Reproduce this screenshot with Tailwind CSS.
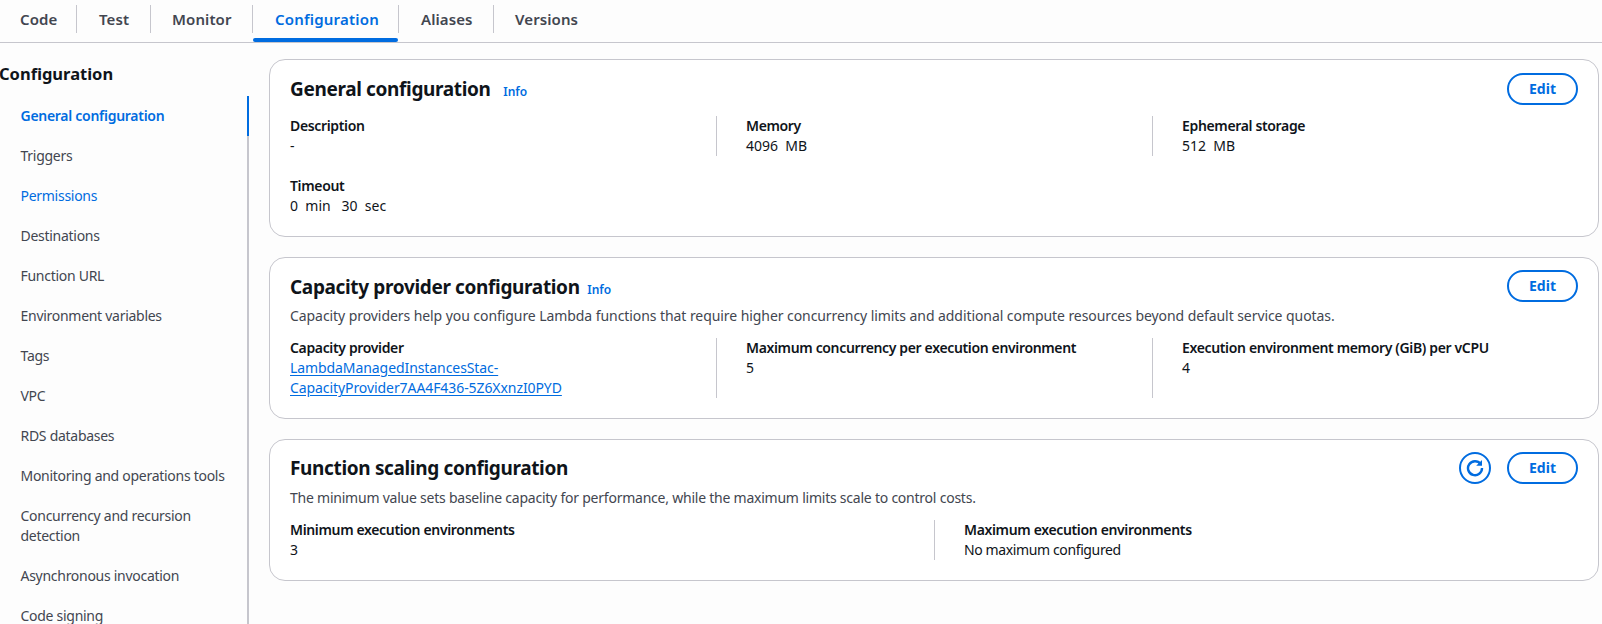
<!DOCTYPE html>
<html lang="en">
<head>
    <meta charset="UTF-8">
    <title>Lambda function configuration</title>
    <script src="https://cdn.jsdelivr.net/npm/@tailwindcss/browser@4"></script>
</head>
<body class="bg-[#fdfdfd] text-[#0f141a] font-['Noto_Sans',sans-serif] text-[14px] leading-[20px] h-[624px] overflow-hidden">
    <!-- tabs -->
    <nav class="flex h-[43px] border-b border-[#c6c6cd] font-semibold text-[#424650] text-[15px] tracking-[0.1px]">
        <div class="w-[77px] pl-[20px] h-[28px] mt-[5px] border-r border-[#c6c6cd] flex items-center">Code</div>
        <div class="w-[74px] pl-[22px] h-[28px] mt-[5px] border-r border-[#c6c6cd] flex items-center">Test</div>
        <div class="w-[102px] pl-[21px] h-[28px] mt-[5px] border-r border-[#c6c6cd] flex items-center">Monitor</div>
        <div class="relative w-[146px] pl-[22px] h-[28px] mt-[5px] border-r border-[#c6c6cd] flex items-center text-[#006ce0] tracking-[0.2px]">
            Configuration
            <span class="absolute left-0 right-0 top-[33px] h-[4px] bg-[#006ce0] rounded-[2px]"></span>
        </div>
        <div class="w-[95px] pl-[22px] h-[28px] mt-[5px] border-r border-[#c6c6cd] flex items-center">Aliases</div>
        <div class="pl-[21px] h-[28px] mt-[5px] flex items-center">Versions</div>
    </nav>

    <div class="flex">
        <!-- side nav -->
        <aside class="w-[269px] shrink-0">
            <h2 class="font-bold text-[16.5px] leading-[24px] -ml-[1px] mt-[19px] mb-[10px]">Configuration</h2>
            <ul class="w-[249px] text-[#424650] h-[528px] overflow-hidden tracking-[-0.28px]">
                <li class="pl-[20.5px] py-[10px] border-r-2 border-[#006ce0] font-semibold text-[#006ce0]">General configuration</li>
                <li class="pl-[20.5px] py-[10px] border-r-2 border-[#c6c6cd]">Triggers</li>
                <li class="pl-[20.5px] py-[10px] border-r-2 border-[#c6c6cd] text-[#006ce0]">Permissions</li>
                <li class="pl-[20.5px] py-[10px] border-r-2 border-[#c6c6cd]">Destinations</li>
                <li class="pl-[20.5px] py-[10px] border-r-2 border-[#c6c6cd]">Function URL</li>
                <li class="pl-[20.5px] py-[10px] border-r-2 border-[#c6c6cd]">Environment variables</li>
                <li class="pl-[20.5px] py-[10px] border-r-2 border-[#c6c6cd]">Tags</li>
                <li class="pl-[20.5px] py-[10px] border-r-2 border-[#c6c6cd]">VPC</li>
                <li class="pl-[20.5px] py-[10px] border-r-2 border-[#c6c6cd]">RDS databases</li>
                <li class="pl-[20.5px] py-[10px] border-r-2 border-[#c6c6cd]">Monitoring and operations tools</li>
                <li class="pl-[20.5px] py-[10px] pr-[20px] border-r-2 border-[#c6c6cd]">Concurrency and recursion detection</li>
                <li class="pl-[20.5px] py-[10px] border-r-2 border-[#c6c6cd]">Asynchronous invocation</li>
                <li class="pl-[20.5px] py-[10px] border-r-2 border-[#c6c6cd]">Code signing</li>
            </ul>
        </aside>

        <!-- cards -->
        <main class="w-[1330px] pt-[16px] flex flex-col gap-[20px]">
            <section class="bg-white border border-[#c6c6cd] rounded-[16px] px-[20px] pt-[13px] pb-[20px]">
                <div class="flex items-start justify-between h-[32px] -mb-[1px]">
                    <h3 class="mt-[1px] text-[19px] tracking-[-0.35px] font-bold leading-[30px]">General configuration <a class="ml-[8px] text-[12px] tracking-normal font-semibold text-[#006ce0]">Info</a></h3>
                    <button class="w-[71px] h-[32px] rounded-full border-2 border-[#006ce0] text-[#006ce0] font-bold">Edit</button>
                </div>
                <div class="grid grid-cols-[426px_436px_1fr] mt-[12px]">
                    <div>
                        <div class="font-semibold tracking-[-0.35px]">Description</div>
                        <div>-</div>
                    </div>
                    <div class="border-l border-[#c6c6cd] pl-[29px]">
                        <div class="font-semibold tracking-[-0.35px]">Memory</div>
                        <div class="whitespace-pre">4096  MB</div>
                    </div>
                    <div class="border-l border-[#c6c6cd] pl-[29px]">
                        <div class="font-semibold tracking-[-0.35px]">Ephemeral storage</div>
                        <div class="whitespace-pre">512  MB</div>
                    </div>
                    <div class="col-span-3 mt-[20px]">
                        <div class="font-semibold tracking-[-0.35px]">Timeout</div>
                        <div class="whitespace-pre">0  min   30  sec</div>
                    </div>
                </div>
            </section>

            <section class="bg-white border border-[#c6c6cd] rounded-[16px] px-[20px] pt-[12px] pb-[20px]">
                <div class="flex items-start justify-between h-[32px]">
                    <h3 class="mt-[2px] text-[19px] tracking-[-0.35px] font-bold leading-[30px]">Capacity provider configuration <a class="ml-[3px] text-[12px] tracking-normal font-semibold text-[#006ce0]">Info</a></h3>
                    <button class="w-[71px] h-[32px] rounded-full border-2 border-[#006ce0] text-[#006ce0] font-bold">Edit</button>
                </div>
                <p class="mt-[4px] text-[#424650] tracking-[-0.07px]">Capacity providers help you configure Lambda functions that require higher concurrency limits and additional compute resources beyond default service quotas.</p>
                <div class="grid grid-cols-[426px_436px_1fr] mt-[12px]">
                    <div>
                        <div class="font-semibold tracking-[-0.35px]">Capacity provider</div>
                        <a class="text-[#006ce0] underline underline-offset-2 tracking-[-0.08px]">LambdaManagedInstancesStac-<br>CapacityProvider7AA4F436-5Z6XxnzI0PYD</a>
                    </div>
                    <div class="border-l border-[#c6c6cd] pl-[29px]">
                        <div class="font-semibold tracking-[-0.35px]">Maximum concurrency per execution environment</div>
                        <div>5</div>
                    </div>
                    <div class="border-l border-[#c6c6cd] pl-[29px]">
                        <div class="font-semibold tracking-[-0.35px]">Execution environment memory (GiB) per vCPU</div>
                        <div>4</div>
                    </div>
                </div>
            </section>

            <section class="bg-white border border-[#c6c6cd] rounded-[16px] px-[20px] pt-[12px] pb-[20px]">
                <div class="flex items-center justify-between h-[32px]">
                    <h3 class="text-[19px] tracking-[-0.35px] font-bold leading-[30px]">Function scaling configuration</h3>
                    <div class="flex items-center gap-[16px]">
                        <button class="w-[32px] h-[32px] rounded-full border-2 border-[#006ce0] flex items-center justify-center">
                            <svg class="w-[18px] h-[18px]" viewBox="0 0 18 18" fill="none">
                                <path d="M14.6 5A7 7 0 1 0 16 9" stroke="#006ce0" stroke-width="2.4"/>
                                <path d="M16 1V6.8H10.2Z" fill="#006ce0"/>
                            </svg>
                        </button>
                        <button class="w-[71px] h-[32px] rounded-full border-2 border-[#006ce0] text-[#006ce0] font-bold">Edit</button>
                    </div>
                </div>
                <p class="mt-[4px] text-[#424650] tracking-[-0.23px]">The minimum value sets baseline capacity for performance, while the maximum limits scale to control costs.</p>
                <div class="grid grid-cols-2 mt-[12px]">
                    <div>
                        <div class="font-semibold tracking-[-0.35px]">Minimum execution environments</div>
                        <div>3</div>
                    </div>
                    <div class="border-l border-[#c6c6cd] pl-[29px]">
                        <div class="font-semibold tracking-[-0.35px]">Maximum execution environments</div>
                        <div class="tracking-[-0.38px]">No maximum configured</div>
                    </div>
                </div>
            </section>
        </main>
    </div>
</body>
</html>
